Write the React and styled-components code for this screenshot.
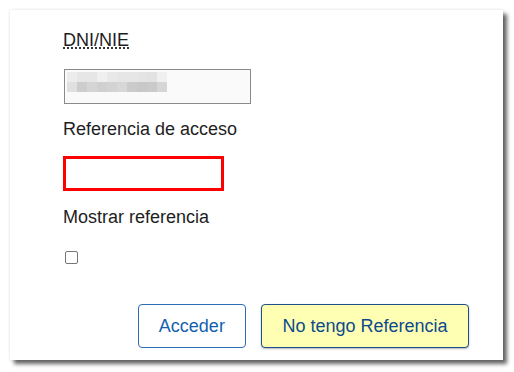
import React from "react";
import styled, { createGlobalStyle } from "styled-components";

const GlobalStyle = createGlobalStyle`
  body {
    margin: 0;
    background: #ffffff;
    font-family: "Liberation Sans", Arial, sans-serif;
  }
`;

// pixelated (blurred) DNI value, two rows of grey tiles
const MOSAIC = [
  ["#ececec", "#e6e6e6", "#e6e6e6", "#efefef", "#e8e8e8", "#e5e5e5", "#e6e6e6", "#e4e4e4", "#e2e2e2", "#f0f0f0"],
  ["#e0e0e0", "#cdcdcd", "#d5d5d5", "#d0d0d0", "#d3d3d3", "#d7d7d7", "#cbcbcb", "#c8c8c8", "#cacaca", "#d6d6d6"],
];

const App = () => {
  return (
    <>
      <GlobalStyle />
      <Page>
        <Card>
          <Field gap="18px">
            <Label>
              <Abbr title="Documento Nacional de Identidad / Número de Identidad de Extranjero">
                DNI/NIE
              </Abbr>
            </Label>
            <DniBox>
              <Mosaic>
                {MOSAIC.flat().map((c, i) => (
                  <Tile key={i} style={{ background: c }} />
                ))}
              </Mosaic>
            </DniBox>
          </Field>

          <Field gap="16px" top="15px">
            <Label>Referencia de acceso</Label>
            <RefInput type="password" />
          </Field>

          <Field gap="23px" top="16px">
            <Label>Mostrar referencia</Label>
            <Check type="checkbox" />
          </Field>

          <BtnBox>
            <Button>Acceder</Button>
            <Button className="NoRefBtn">No tengo Referencia</Button>
          </BtnBox>
        </Card>
      </Page>
    </>
  );
};

const Page = styled.div`
  box-sizing: border-box;
  min-height: 372px;
  padding: 10px 11px 12px 10px;
`;

const Card = styled.div`
  box-sizing: border-box;
  width: 493px;
  height: 350px;
  padding: 20px 34px 11px 54px;
  display: flex;
  flex-direction: column;
  background: #ffffff;
  box-shadow: 4px 4px 4px rgba(0, 0, 0, 0.6), 0 0 3px rgba(0, 0, 0, 0.12);
`;

const Field = styled.div`
  display: flex;
  flex-direction: column;
  align-items: flex-start;
  gap: ${(p) => p.gap};
  margin-top: ${(p) => p.top || "0"};
`;

const Label = styled.div`
  font-size: 18px;
  line-height: 21px;
  color: #1e1e1e;
  margin-left: -1px;
`;

const Abbr = styled.abbr`
  text-decoration: underline dotted;
  text-underline-offset: 2px;
  cursor: help;
`;

const DniBox = styled.div`
  box-sizing: border-box;
  width: 187px;
  height: 35px;
  border: 1px solid #8a8a8a;
  background: #fafafa;
  padding: 2px 0 0 2px;
`;

const Mosaic = styled.div`
  display: grid;
  grid-template-columns: repeat(10, 10px);
  grid-auto-rows: 10px;
`;

const Tile = styled.span`
  display: block;
`;

const RefInput = styled.input`
  box-sizing: border-box;
  width: 161px;
  height: 35px;
  margin: 0 0 0 -1px;
  border: 3px solid #ff0000;
  background: #ffffff;
  outline: none;
  font-size: 18px;
  font-family: "Liberation Sans", Arial, sans-serif;
`;

const Check = styled.input`
  appearance: none;
  box-sizing: border-box;
  width: 13px;
  height: 13px;
  margin: 0 0 0 1px;
  border: 1px solid #767676;
  border-radius: 2px;
  background: #ffffff;
`;

const BtnBox = styled.div`
  display: flex;
  justify-content: flex-end;
  gap: 15px;
  margin-top: 40px;
`;

const Button = styled.button`
  box-sizing: border-box;
  height: 44px;
  padding: 0 20px;
  font-family: "Liberation Sans", Arial, sans-serif;
  font-size: 18px;
  color: #135fae;
  background: #ffffff;
  border: 1px solid #2a6db5;
  border-radius: 4px;
  cursor: pointer;
  &.NoRefBtn {
    padding: 0 20.5px;
    color: #0b4a8e;
    background: #ffffb3;
    border: 1px solid #1d4f8a;
    box-shadow: 0 1px 2px rgba(0, 0, 0, 0.3);
  }
`;

export default App;
